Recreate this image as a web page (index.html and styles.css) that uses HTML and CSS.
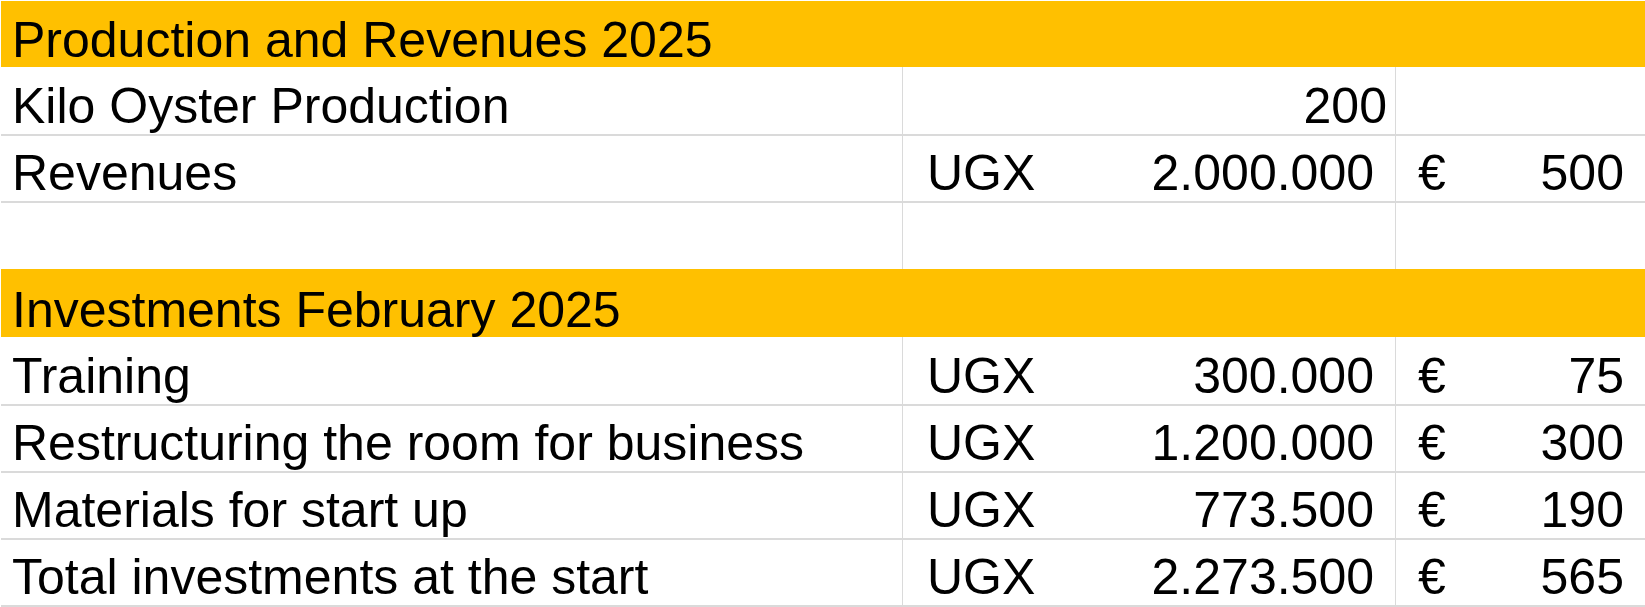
FILE: index.html
```html
<!DOCTYPE html>
<html>
<head>
<meta charset="utf-8">
<link rel="stylesheet" href="styles.css">
</head>
<body>
<div class="sheet">
  <div class="row head h66"><div class="title">Production and Revenues 2025</div></div>
  <div class="row data h67 line">
    <div class="cell ca">Kilo Oyster Production</div>
    <div class="cell cb general"><span>200</span></div>
    <div class="cell cc"></div>
  </div>
  <div class="row data h65 line">
    <div class="cell ca">Revenues</div>
    <div class="cell cb acct"><span>UGX</span><span>2.000.000</span></div>
    <div class="cell cc acct eur"><span>€</span><span>500</span></div>
  </div>
  <div class="row data h66">
    <div class="cell ca"></div>
    <div class="cell cb"></div>
    <div class="cell cc"></div>
  </div>
  <div class="row head h68"><div class="title">Investments February 2025</div></div>
  <div class="row data h67 line">
    <div class="cell ca">Training</div>
    <div class="cell cb acct"><span>UGX</span><span>300.000</span></div>
    <div class="cell cc acct eur"><span>€</span><span>75</span></div>
  </div>
  <div class="row data h65 line">
    <div class="cell ca">Restructuring the room for business</div>
    <div class="cell cb acct"><span>UGX</span><span>1.200.000</span></div>
    <div class="cell cc acct eur"><span>€</span><span>300</span></div>
  </div>
  <div class="row data h65 line">
    <div class="cell ca">Materials for start up</div>
    <div class="cell cb acct"><span>UGX</span><span>773.500</span></div>
    <div class="cell cc acct eur"><span>€</span><span>190</span></div>
  </div>
  <div class="row data h65 line">
    <div class="cell ca">Total investments at the start</div>
    <div class="cell cb acct"><span>UGX</span><span>2.273.500</span></div>
    <div class="cell cc acct eur"><span>€</span><span>565</span></div>
  </div>
</div>
</body>
</html>
```
FILE: styles.css
```css
html, body {
  margin: 0;
  padding: 0;
  background: #ffffff;
}
body {
  font-family: "Liberation Sans", Arial, sans-serif;
  font-size: 50px;
  line-height: 1;
  color: #000000;
}
.sheet {
  width: 1644px;
  padding-top: 1px;
  padding-left: 1px;
  display: flex;
  flex-direction: column;
}
.row {
  display: flex;
  box-sizing: content-box;
}
.h65 { height: 65px; }
.h66 { height: 66px; }
.h67 { height: 67px; }
.h68 { height: 68px; }
.line {
  border-bottom: 2px solid #dadada;
}
.head {
  background: #ffc000;
  align-items: flex-end;
}
.title {
  padding-left: 11px;
  padding-bottom: 2px;
  white-space: nowrap;
}
.cell {
  display: flex;
  align-items: flex-end;
  box-sizing: border-box;
  padding-bottom: 3px;
  white-space: nowrap;
}
.ca {
  width: 901px;
  padding-left: 11px;
}
.cb {
  width: 493px;
  border-left: 1px solid #dadada;
}
.cc {
  width: 250px;
  border-left: 1px solid #dadada;
}
.general {
  justify-content: flex-end;
  padding-right: 8px;
}
.acct {
  justify-content: space-between;
  padding-left: 24px;
  padding-right: 21px;
}
.eur {
  padding-left: 22px;
}
```
